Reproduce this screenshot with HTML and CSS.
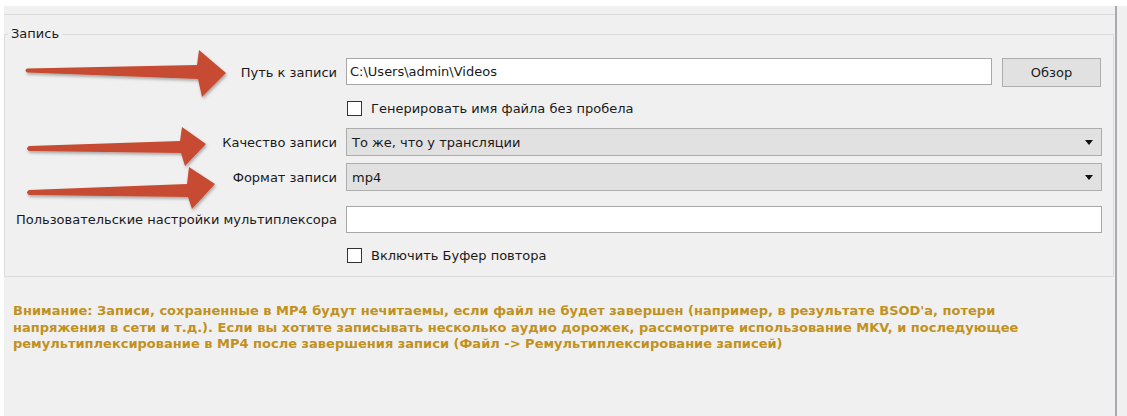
FILE: index.html
```html
<!DOCTYPE html>
<html lang="ru">
<head>
<meta charset="utf-8">
<title>Запись</title>
<link rel="stylesheet" href="styles.css">
</head>
<body>
<div class="page">
  <div class="panel">
    <div class="top-rule"></div>

    <fieldset class="group">
      <legend class="group-title">Запись</legend>

      <div class="form-row row-path">
        <label class="field-label">Путь к записи</label>
        <div class="field-control path-control">
          <div class="text-input path-input">C:\Users\admin\Videos</div>
          <button class="btn">Обзор</button>
        </div>
      </div>

      <div class="form-row row-check1">
        <span class="field-label"></span>
        <label class="check">
          <span class="check-box"></span>
          <span class="check-text">Генерировать имя файла без пробела</span>
        </label>
      </div>

      <div class="form-row row-quality">
        <label class="field-label">Качество записи</label>
        <div class="combo">
          <span class="combo-value">То же, что у трансляции</span>
          <span class="combo-arrow"></span>
        </div>
      </div>

      <div class="form-row row-format">
        <label class="field-label">Формат записи</label>
        <div class="combo">
          <span class="combo-value">mp4</span>
          <span class="combo-arrow"></span>
        </div>
      </div>

      <div class="form-row row-muxer">
        <label class="field-label">Пользовательские настройки мультиплексора</label>
        <div class="text-input"></div>
      </div>

      <div class="form-row row-check2">
        <span class="field-label"></span>
        <label class="check">
          <span class="check-box"></span>
          <span class="check-text">Включить Буфер повтора</span>
        </label>
      </div>
    </fieldset>

    <p class="warning">Внимание: Записи, сохраненные в MP4 будут нечитаемы, если файл не будет завершен (например, в результате BSOD'a, потери<br>напряжения в сети и т.д.). Если вы хотите записывать несколько аудио дорожек, рассмотрите использование MKV, и последующее<br>ремультиплексирование в MP4 после завершения записи (Файл -&gt; Ремультиплексирование записей)</p>
  </div>
  <div class="edge"></div>
  <div class="gutter"></div>
</div>

<svg class="pointers" width="1127" height="416" viewBox="0 0 1127 416" aria-hidden="true">
  <defs>
    <filter id="soft-shadow" x="-10%" y="-30%" width="120%" height="160%">
      <feDropShadow dx="1" dy="2" stdDeviation="1.6" flood-color="#000" flood-opacity="0.3"/>
    </filter>
  </defs>
  <g fill="#c64b32" filter="url(#soft-shadow)">
    <path d="M27 68.5 L197 65 L199 50 L226 73 L202 97 L198 79 L27 72.5 Q24 70.5 27 68.5 Z"/>
    <path d="M29 146 L180 141 L182 127 L206 144 L185 166 L181 153 L29 151 Q25 148.5 29 146 Z"/>
    <path d="M29 190 L187 184 L189 167 L215 184 L192 209 L188 197 L29 195 Q25 192.5 29 190 Z"/>
  </g>
</svg>
</body>
</html>
```

FILE: styles.css
```css
html, body {
  margin: 0;
  padding: 0;
  background: #ffffff;
}

body {
  position: relative;
  width: 1127px;
  height: 416px;
  overflow: hidden;
  font-family: "DejaVu Sans", "Liberation Sans", sans-serif;
  font-size: 13px;
  color: #1a1a1a;
}

.page {
  display: flex;
  height: 410px;
  margin-top: 6px;
}

.panel {
  margin-left: 4px;
  width: 1111px;
  background: #f0f0f0;
  display: flex;
  flex-direction: column;
}

.edge {
  width: 2px;
  background: #a9a9b1;
}

.gutter {
  flex: 1;
  background: #f0f0f0;
}

.top-rule {
  height: 8px;
  border-bottom: 1px solid #dcdcdc;
}

/* settings group */
.group {
  margin: 11px 1px 0 0;
  padding: 16px 11px 11px 0;
  min-width: 0;
  border: 1px solid #dcdcdc;
}

.group-title {
  margin-left: 3px;
  padding: 0 3px;
  line-height: 16px;
  font-size: 13px;
  color: #1a1a1a;
}

.form-row {
  display: flex;
  align-items: center;
}

.field-label {
  flex: 0 0 332px;
  text-align: right;
  margin-right: 9px;
}

.row-path { height: 28px; }
.row-check1 { height: 20px; margin-top: 12px; }
.row-quality { height: 28px; margin-top: 10px; }
.row-format { height: 28px; margin-top: 7px; }
.row-muxer { height: 27px; margin-top: 15px; }
.row-check2 { height: 20px; margin-top: 12px; }

.path-control {
  flex: 1;
  display: flex;
  gap: 10px;
  height: 28px;
}

.text-input {
  flex: 1;
  box-sizing: border-box;
  height: 100%;
  background: #ffffff;
  border: 1px solid #a8a8a8;
  padding: 0 3px;
  display: flex;
  align-items: center;
}

.path-input {
  height: 27px;
}

.btn {
  flex: 0 0 99px;
  box-sizing: border-box;
  height: 29px;
  margin-right: 1px;
  background: #e1e1e1;
  border: 1px solid #adadad;
  font: inherit;
  color: #1a1a1a;
  padding: 0;
}

.combo {
  flex: 1;
  box-sizing: border-box;
  height: 28px;
  background: #e1e1e1;
  border: 1px solid #adadad;
  padding: 0 8px 0 5px;
  display: flex;
  align-items: center;
  justify-content: space-between;
}

.combo-arrow {
  width: 0;
  height: 0;
  border-left: 4.5px solid transparent;
  border-right: 4.5px solid transparent;
  border-top: 5px solid #111111;
}

.check {
  display: flex;
  align-items: center;
  gap: 9px;
  margin-left: 1px;
}

.check-box {
  box-sizing: border-box;
  width: 15px;
  height: 15px;
  background: #ffffff;
  border: 1px solid #333333;
}

/* recording format warning */
.warning {
  margin: 26px 0 0 9px;
  font-family: "DejaVu Sans", sans-serif;
  font-weight: bold;
  font-size: 13px;
  line-height: 16.5px;
  color: #c2911c;
  white-space: nowrap;
}

.pointers {
  position: absolute;
  left: 0;
  top: 0;
  pointer-events: none;
}
```
